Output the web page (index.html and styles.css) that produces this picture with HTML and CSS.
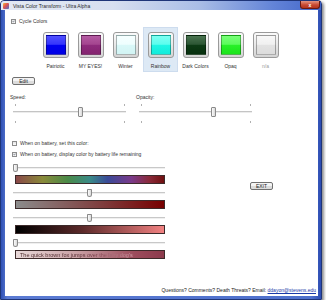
FILE: index.html
```html
<!DOCTYPE html>
<html lang="en">
<head>
    <meta charset="UTF-8">
    <title>Vista Color Transform - Ultra Alpha</title>
    <link rel="stylesheet" href="styles.css">
</head>
<body>
    <div class="window">
        <div class="titlebar">
            <span class="appicon"></span>
            <span class="title">Vista Color Transform - Ultra Alpha</span>
            <span class="close">x</span>
        </div>
        <div class="client">
            <div class="check cycle">
                <span class="box"><svg viewBox="0 0 5 5"><path d="M1 2.4 L2.1 3.6 L4.1 1.2" /></svg></span>
                Cycle Colors
            </div>

            <div class="swatches">
                <div class="item"><div class="swatch"><div class="fill patriotic"></div></div><span>Patriotic</span></div>
                <div class="item"><div class="swatch"><div class="fill myeyes"></div></div><span>MY EYES!</span></div>
                <div class="item"><div class="swatch"><div class="fill winter"></div></div><span>Winter</span></div>
                <div class="item active"><div class="swatch"><div class="fill rainbow"></div></div><span>Rainbow</span></div>
                <div class="item"><div class="swatch"><div class="fill dark"></div></div><span>Dark Colors</span></div>
                <div class="item"><div class="swatch"><div class="fill opaq"></div></div><span>Opaq</span></div>
                <div class="item off"><div class="swatch"><div class="fill na"></div></div><span>n/a</span></div>
            </div>

            <button class="btn edit">Edit</button>

            <div class="settings">
                <div class="setting speed">
                    <div class="label">Speed:</div>
                    <div class="trackbar">
                        <div class="line"></div>
                        <i class="tick t1"></i><i class="tick t2"></i><i class="tick b1"></i><i class="tick b2"></i>
                        <div class="thumb" style="left:65px"></div>
                    </div>
                </div>
                <div class="setting opacity">
                    <div class="label">Opacity:</div>
                    <div class="trackbar">
                        <div class="line"></div>
                        <i class="tick t1"></i><i class="tick t2"></i><i class="tick b1"></i><i class="tick b2"></i>
                        <div class="thumb" style="left:72px"></div>
                    </div>
                </div>
            </div>

            <div class="check battery1">
                <span class="box"></span>
                When on battery, set this color:
            </div>
            <div class="check battery2">
                <span class="box"><svg viewBox="0 0 5 5"><path d="M1 2.4 L2.1 3.6 L4.1 1.2" /></svg></span>
                When on battery, display color by battery life remaining
            </div>

            <div class="lower">
                <div class="colors">
                    <div class="mini"><div class="line"></div><div class="pin" style="left:-2px"></div></div>
                    <div class="bar hue"></div>
                    <div class="mini"><div class="line"></div><div class="pin" style="left:72px"></div></div>
                    <div class="bar sat"></div>
                    <div class="mini"><div class="line"></div><div class="pin" style="left:72px"></div></div>
                    <div class="bar lum"></div>
                    <div class="mini"><div class="line"></div><div class="pin" style="left:-2px"></div></div>
                    <div class="bar preview"><span>The quick brown fox jumps over the lazy dog's</span></div>
                </div>
                <button class="btn exit">EXIT</button>
            </div>

            <div class="footer">Questions? Comments? Death Threats? Email: <a href="#">ddayon@stevens.edu</a></div>
        </div>
    </div>
</body>
</html>
```

FILE: styles.css
```css
*{
    margin: 0;
    padding: 0;
    box-sizing: border-box;
}

body{
    background: #fff;
    font-family: "Liberation Sans", Arial, sans-serif;
    font-size: 5px;
    color: #222;
}

/* window frame */
.window{
    width: 322px;
    height: 300px;
    display: flex;
    flex-direction: column;
    border: 1px solid #1f3578;
    border-radius: 4px 4px 0 0;
    background: linear-gradient(90deg, #2f50b4, #5b7bd3 2%, #4e70cc 97%, #2c4cb2);
    box-shadow: 2px 2px 3px rgba(0,0,0,0.45);
}

.titlebar{
    height: 9px;
    display: flex;
    align-items: center;
    padding-left: 2px;
    border-radius: 3px 3px 0 0;
    background: linear-gradient(90deg, #e4e9f3 0%, #d7dff0 35%, #a9bde6 62%, #6384d8 85%, #4266c9 100%);
}
.appicon{
    width: 6px;
    height: 6px;
    border-radius: 1px;
    background: linear-gradient(135deg, #f0c040, #e05050 45%, #4070d0);
}
.title{
    margin-left: 4px;
    color: #2a2a2a;
    white-space: nowrap;
}
.close{
    margin-left: auto;
    margin-right: 1px;
    align-self: flex-start;
    width: 20px;
    height: 8px;
    display: flex;
    align-items: center;
    justify-content: center;
    color: #fff;
    font-weight: bold;
    font-size: 5px;
    border: 1px solid #6a1a10;
    border-top: none;
    border-radius: 0 0 3px 3px;
    background: linear-gradient(#e49482, #c94a32 55%, #b23420);
}

.client{
    flex: 1;
    margin: 0 3px 3px 4px;
    background: #fff;
    display: flex;
    flex-direction: column;
}

/* checkboxes */
.check{
    display: flex;
    align-items: center;
    gap: 3px;
    height: 6px;
    white-space: nowrap;
    color: #333;
}
.box{
    width: 5px;
    height: 5px;
    border: 1px solid #8c8c8c;
    background: linear-gradient(#e4e4e4, #fdfdfd);
    display: flex;
}
.box svg{
    width: 100%;
    height: 100%;
}
.box path{
    fill: none;
    stroke: #2c3a4c;
    stroke-width: 0.9;
}
.cycle{
    margin: 8px 0 0 6px;
}
.battery1{
    margin: 16px 0 0 7px;
}
.battery2{
    margin: 5px 0 0 7px;
}

/* colour scheme buttons */
.swatches{
    display: flex;
    margin: 3px 0 0 33px;
}
.item{
    width: 35px;
    height: 45px;
    padding-top: 5px;
    display: flex;
    flex-direction: column;
    align-items: center;
    color: #333;
}
.item span{
    margin-top: 5px;
    line-height: 6px;
    white-space: nowrap;
}
.item.active{
    background: #dde9f5;
    border: 1px solid #cddcee;
    padding-top: 4px;
}
.item.off span{
    color: #9a9a9a;
}
.swatch{
    width: 26px;
    height: 26px;
    padding: 2px;
    border: 1px solid #9a9a9a;
    border-radius: 3px;
    background: linear-gradient(#fbfbfb, #d4d4d4);
}
.fill{
    height: 100%;
    border: 1px solid rgba(0,0,0,0.3);
}
.patriotic{ background: linear-gradient(#5050ff, #3535fc 46%, #0000f0 52%, #0000e4); }
.myeyes{ background: linear-gradient(#b45aa2, #a4458f 46%, #8e2a7c 52%, #84246f); }
.winter{ background: linear-gradient(#f6ffff, #eefefe 46%, #d9f8f8 52%, #d2f4f4); }
.rainbow{ background: linear-gradient(#7dfff2, #5cfdee 46%, #1ff5e4 52%, #12ecdb); }
.dark{ background: linear-gradient(#4a7450, #2c5634 46%, #0c3a14 52%, #07300e); }
.opaq{ background: linear-gradient(#78ff78, #5cfc5c 46%, #28f028 52%, #1ce41c); }
.na{ background: linear-gradient(#f8f8f8, #f0f0f0 46%, #e2e2e2 52%, #dcdcdc); }

/* buttons */
.btn{
    font-family: "Liberation Sans", Arial, sans-serif;
    font-size: 5px;
    color: #222;
    height: 8px;
    width: 23px;
    border: 1px solid #707070;
    border-radius: 2px;
    background: linear-gradient(#f4f4f4 0 50%, #dcdcdc 50% 100%);
    line-height: 6px;
}
.edit{
    margin: 5px 0 0 7px;
    align-self: flex-start;
}

/* speed / opacity */
.settings{
    display: flex;
    margin-top: 9px;
}
.setting .label{
    line-height: 6px;
    color: #333;
}
.speed{
    width: 126px;
    margin-left: 5px;
}
.opacity{
    width: 120px;
}
.trackbar{
    position: relative;
    height: 24px;
    margin-left: 3px;
    width: 113px;
}
.trackbar .line{
    position: absolute;
    left: 0;
    right: 0;
    top: 11px;
    height: 2px;
    border-top: 1px solid #c4c4c4;
    border-bottom: 1px solid #ececec;
}
.tick{
    position: absolute;
    width: 1px;
    height: 2px;
    background: #b0b0b0;
}
.t1{ left: 2px; top: 4px; }
.t2{ left: 111px; top: 4px; }
.b1{ left: 2px; top: 21px; }
.b2{ left: 111px; top: 21px; }
.thumb{
    position: absolute;
    top: 7px;
    width: 5px;
    height: 10px;
    border: 1px solid #8a8a8a;
    border-radius: 1px;
    background: linear-gradient(90deg, #fcfcfc, #d8d8d8);
}

/* colour bars */
.lower{
    display: flex;
    margin-top: 6px;
}
.colors{
    width: 150px;
    margin-left: 10px;
    display: flex;
    flex-direction: column;
}
.mini{
    position: relative;
    height: 10px;
}
.mini .line{
    position: absolute;
    left: -2px;
    right: 0;
    top: 4px;
    height: 2px;
    border-top: 1px solid #c8c8c8;
    border-bottom: 1px solid #efefef;
}
.pin{
    position: absolute;
    top: 1px;
    width: 5px;
    height: 8px;
    border: 1px solid #8a8a8a;
    border-radius: 1px 1px 3px 3px;
    background: linear-gradient(90deg, #fcfcfc, #dadada);
}
.bar{
    height: 9px;
    margin: 2px 0 4px;
    border: 1px solid #3c2a2a;
}
.hue{
    background: linear-gradient(90deg, #8a4848 0%, #8a8a3a 18%, #4a8a48 35%, #3a8a88 50%, #3a4a98 62%, #7a3a8a 78%, #8a2a3a 90%, #701010 100%);
}
.sat{
    background: linear-gradient(90deg, #8c8c8c, #7e3a3a 60%, #780000);
}
.lum{
    background: linear-gradient(90deg, #000, #5c2a2a 45%, #f28282);
}
.preview{
    padding-left: 4px;
    display: flex;
    align-items: center;
    background: linear-gradient(90deg, #e8d8d8, #caa2a6 40%, #9c4c5c 80%, #8c3a4c);
    overflow: hidden;
}
.preview span{
    font-size: 5.5px;
    white-space: nowrap;
    background: linear-gradient(90deg, #4a2a2a, #582e34 55%, #8a4a56 72%, #d8a8b2);
    -webkit-background-clip: text;
    background-clip: text;
    color: transparent;
}
.exit{
    margin: 19px 0 0 85px;
}

.footer{
    margin-top: auto;
    padding: 0 2px 3px 0;
    text-align: right;
    line-height: 6px;
    white-space: nowrap;
    color: #222;
}
.footer a{
    color: #1a3aa8;
}
```
